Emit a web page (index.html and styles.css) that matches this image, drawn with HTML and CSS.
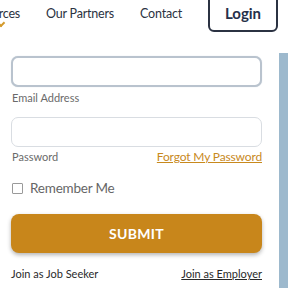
FILE: index.html
```html
<!DOCTYPE html>
<html>
<head>
<meta charset="utf-8">
<link rel="stylesheet" href="styles.css">
</head>
<body>
<header class="topbar">
  <a class="nav-link has-menu">Resources<span class="chev"></span></a>
  <a class="nav-link">Our Partners</a>
  <a class="nav-link">Contact</a>
  <a class="login-btn">Login</a>
</header>
<main class="main">
  <form class="form">
    <input class="field field-focus" type="text">
    <div class="label">Email Address</div>
    <input class="field field-pass" type="password">
    <div class="label-row">
      <span class="label">Password</span>
      <a class="forgot">Forgot My Password</a>
    </div>
    <label class="remember"><span class="box"></span>Remember Me</label>
    <button class="submit" type="button">SUBMIT</button>
    <div class="join-row">
      <a class="join">Join as Job Seeker</a>
      <a class="join join-u">Join as Employer</a>
    </div>
  </form>
  <aside class="panel"></aside>
</main>
</body>
</html>
```
FILE: styles.css
```css
* { box-sizing: border-box; }
html, body { margin: 0; padding: 0; }
body {
  width: 288px;
  height: 288px;
  overflow: hidden;
  background: #fff;
  font-family: Lato, "Open Sans", sans-serif;
  color: #2b3242;
}
.topbar {
  display: flex;
  justify-content: flex-end;
  align-items: flex-start;
  gap: 26px;
  height: 53px;
  padding-right: 10px;
}
.nav-link {
  position: relative;
  display: block;
  flex-shrink: 0;
  font-size: 12.5px;
  letter-spacing: -0.2px;
  line-height: 28px;
  color: #2b3242;
}
.chev {
  position: absolute;
  display: block;
  top: 20px;
  right: 16px;
  width: 6px;
  height: 6px;
  border-right: 2px solid #d39a2c;
  border-bottom: 2px solid #d39a2c;
  transform: rotate(45deg);
}
.login-btn {
  flex-shrink: 0;
  margin-top: -6px;
  width: 70px;
  height: 38px;
  border: 2px solid #2b3242;
  border-radius: 6px;
  display: flex;
  align-items: center;
  justify-content: center;
  font-weight: 700;
  font-size: 15px;
  color: #26304a;
}
.main {
  display: flex;
  height: 235px;
}
.form {
  flex: 0 0 279px;
  padding: 3px 17px 0 11px;
  display: flex;
  flex-direction: column;
}
.field {
  display: block;
  width: 100%;
  margin: 0;
  border-radius: 7px;
  background: #fff;
  outline: none;
}
.field-focus {
  height: 31px;
  border: 2px solid #b9c3ce;
  box-shadow: 0 0 1px #c9d1da;
}
.field-pass {
  height: 30px;
  margin-top: 12px;
  border: 1px solid #d9dde2;
}
.label {
  font-size: 11px;
  line-height: 14px;
  color: #6a6a6a;
  margin-top: 4px;
  padding-left: 1px;
}
.label-row {
  display: flex;
  justify-content: space-between;
  align-items: center;
  margin-top: 3px;
}
.label-row .label { margin-top: 0; }
.forgot {
  font-size: 12px;
  letter-spacing: -0.15px;
  line-height: 14px;
  color: #c8891d;
  text-decoration: underline;
}
.remember {
  display: flex;
  align-items: center;
  gap: 7px;
  margin-top: 15px;
  padding-left: 1px;
  font-size: 13.5px;
  letter-spacing: -0.2px;
  line-height: 18px;
  color: #666;
}
.box {
  width: 11px;
  height: 11px;
  border: 1px solid #9a9a9a;
  border-radius: 1px;
}
.submit {
  margin-top: 17px;
  height: 39px;
  width: 100%;
  border: none;
  border-radius: 8px;
  background: #c8861b;
  color: #fff;
  font-family: inherit;
  font-weight: 700;
  font-size: 14px;
  letter-spacing: 0.3px;
  box-shadow: 0 2px 4px rgba(0,0,0,0.3);
}
.join-row {
  display: flex;
  justify-content: space-between;
  margin-top: 14px;
}
.join {
  font-size: 11px;
  line-height: 14px;
  color: #2a2a2a;
}
.join-u { text-decoration: underline; }
.panel {
  flex: 1;
  background: #9db9cd;
}
```
